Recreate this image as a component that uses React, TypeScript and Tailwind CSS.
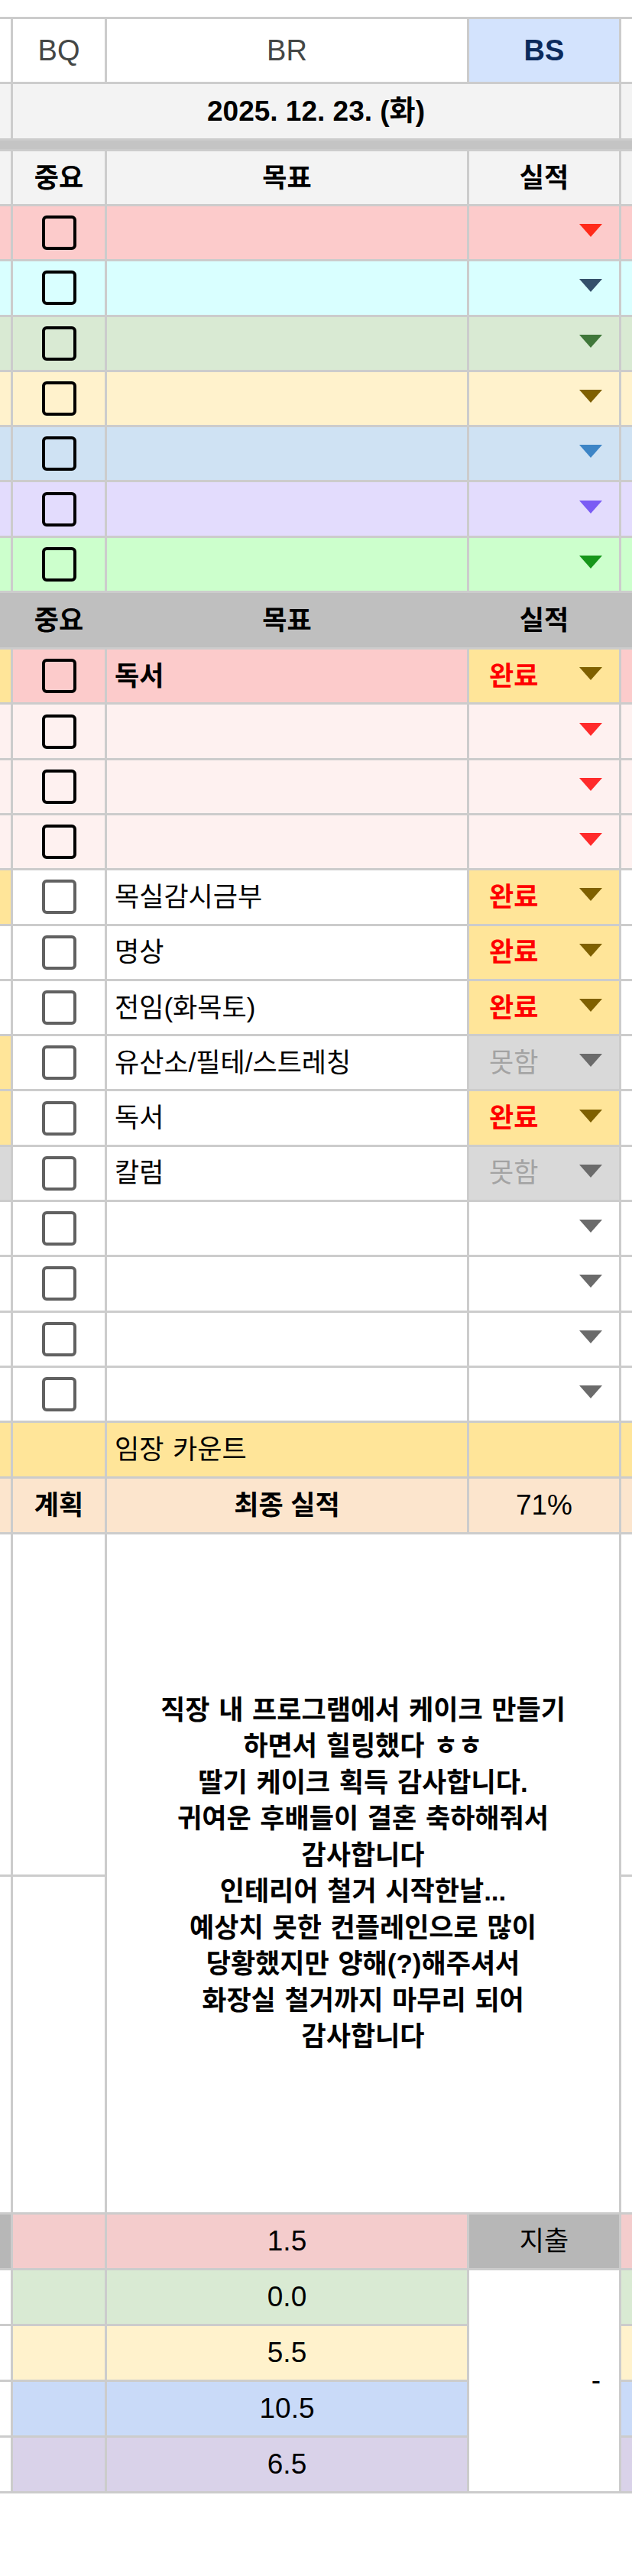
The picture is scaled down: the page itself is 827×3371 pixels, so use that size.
import React from "react";

const GRID = "grid grid-cols-[14px_120px_471px_196px_14px] gap-x-[3px]";
const FONT = "font-['Liberation_Sans','Noto_Sans_CJK_KR',sans-serif]";

function Arrow({ color }: { color: string }) {
  return (
    <svg width="30" height="17" viewBox="0 0 30 17" className="ml-auto mb-[6px] shrink-0">
      <polygon points="0,0 30,0 15,17" fill={color} />
    </svg>
  );
}

function Box({ gray }: { gray?: boolean }) {
  return (
    <div
      className={`w-[45px] h-[45px] rounded-[6px] border-[4px] ${
        gray ? "border-[#616161]" : "border-black"
      }`}
    />
  );
}

type Sec1 = { bg: string; arrow: string };
const sec1: Sec1[] = [
  { bg: "bg-[#fccbcb]", arrow: "#ff2a1a" },
  { bg: "bg-[#d9ffff]", arrow: "#34506b" },
  { bg: "bg-[#d9ead3]", arrow: "#40773a" },
  { bg: "bg-[#fff2cc]", arrow: "#7f6000" },
  { bg: "bg-[#cfe2f3]", arrow: "#3d85c6" },
  { bg: "bg-[#e3dcfd]", arrow: "#7a5cf4" },
  { bg: "bg-[#ccffcc]", arrow: "#16961a" },
];

type Sec2 = {
  ls: string;
  main: string;
  bs: string;
  rs: string;
  text?: string;
  bold?: boolean;
  status?: "완료" | "못함";
  arrow: string;
  gray?: boolean;
};

const Y = "bg-[#ffe599]";
const W = "bg-white";
const G = "bg-[#d9d9d9]";
const P = "bg-[#fccbcb]";
const LP = "bg-[#fef1f0]";

const sec2: Sec2[] = [
  { ls: Y, main: P, bs: Y, rs: P, text: "독서", bold: true, status: "완료", arrow: "#7f6000" },
  { ls: LP, main: LP, bs: LP, rs: LP, arrow: "#ff2b2b" },
  { ls: LP, main: LP, bs: LP, rs: LP, arrow: "#ff2b2b" },
  { ls: LP, main: LP, bs: LP, rs: LP, arrow: "#ff2b2b" },
  { ls: Y, main: W, bs: Y, rs: W, text: "목실감시금부", status: "완료", arrow: "#7f6000", gray: true },
  { ls: W, main: W, bs: Y, rs: W, text: "명상", status: "완료", arrow: "#7f6000", gray: true },
  { ls: W, main: W, bs: Y, rs: W, text: "전임(화목토)", status: "완료", arrow: "#7f6000", gray: true },
  { ls: Y, main: W, bs: G, rs: W, text: "유산소/필테/스트레칭", status: "못함", arrow: "#6b6b6b", gray: true },
  { ls: Y, main: W, bs: Y, rs: W, text: "독서", status: "완료", arrow: "#7f6000", gray: true },
  { ls: G, main: W, bs: G, rs: W, text: "칼럼", status: "못함", arrow: "#6b6b6b", gray: true },
  { ls: W, main: W, bs: W, rs: W, arrow: "#6b6b6b", gray: true },
  { ls: W, main: W, bs: W, rs: W, arrow: "#6b6b6b", gray: true },
  { ls: W, main: W, bs: W, rs: W, arrow: "#6b6b6b", gray: true },
  { ls: W, main: W, bs: W, rs: W, arrow: "#6b6b6b", gray: true },
];

const bottom = [
  { bg: "bg-[#f4cccc]", v: "1.5" },
  { bg: "bg-[#d9ead3]", v: "0.0" },
  { bg: "bg-[#fff2cc]", v: "5.5" },
  { bg: "bg-[#c9daf8]", v: "10.5" },
  { bg: "bg-[#d9d2e9]", v: "6.5" },
];

const bigText = `직장 내 프로그램에서 케이크 만들기
하면서 힐링했다 ㅎㅎ
딸기 케이크 획득 감사합니다.
귀여운 후배들이 결혼 축하해줘서
감사합니다
인테리어 철거 시작한날...
예상치 못한 컨플레인으로 많이
당황했지만 양해(?)해주셔서
화장실 철거까지 마무리 되어
감사합니다`;

export default function App() {
  return (
    <div className={`bg-white min-h-[3371px] w-[827px] pt-[22px] text-black ${FONT}`}>
      <div className="bg-[#cccccc] flex flex-col gap-[3px] py-[3px]">
        {/* column letters */}
        <div className={`${GRID} h-[82px]`}>
          <div className="bg-white" />
          <div className="bg-white flex items-center justify-center text-[38px] text-[#444746]">BQ</div>
          <div className="bg-white flex items-center justify-center text-[38px] text-[#444746]">BR</div>
          <div className="bg-[#d3e3fd] flex items-center justify-center text-[38px] font-bold text-[#0b2a5c]">BS</div>
          <div className="bg-white" />
        </div>

        {/* date */}
        <div className={`${GRID} h-[71px]`}>
          <div className="bg-[#f3f3f3]" />
          <div className="col-span-3 bg-[#f3f3f3] flex items-center justify-center text-[37px] font-bold leading-[44px]">
            2025. 12. 23. (화)
          </div>
          <div className="bg-[#f3f3f3]" />
        </div>

        {/* frozen separator */}
        <div className="h-[11px] bg-[#c4c4c4]" />

        {/* header 1 */}
        <div className={`${GRID} h-[69px] text-[35px] font-bold leading-[42px]`}>
          <div className="bg-[#f3f3f3]" />
          <div className="bg-[#f3f3f3] flex items-center justify-center">중요</div>
          <div className="bg-[#f3f3f3] flex items-center justify-center">목표</div>
          <div className="bg-[#f3f3f3] flex items-center justify-center">실적</div>
          <div className="bg-[#f3f3f3]" />
        </div>

        {sec1.map((r, i) => (
          <div key={i} className={`${GRID} h-[69.3px]`}>
            <div className={r.bg} />
            <div className={`${r.bg} flex items-center justify-center`}>
              <Box />
            </div>
            <div className={r.bg} />
            <div className={`${r.bg} flex items-center pr-[22px]`}>
              <Arrow color={r.arrow} />
            </div>
            <div className={r.bg} />
          </div>
        ))}

        {/* header 2 */}
        <div className={`${GRID} h-[71px] text-[35px] font-bold leading-[42px] bg-[#bfbfbf]`}>
          <div className="bg-[#bfbfbf]" />
          <div className="bg-[#bfbfbf] flex items-center justify-center">중요</div>
          <div className="bg-[#bfbfbf] flex items-center justify-center">목표</div>
          <div className="bg-[#bfbfbf] flex items-center justify-center">실적</div>
          <div className="bg-[#bfbfbf]" />
        </div>

        {sec2.map((r, i) => (
          <div key={i} className={`${GRID} h-[69.3px] text-[35px] leading-[42px]`}>
            <div className={r.ls} />
            <div className={`${r.main} flex items-center justify-center`}>
              <Box gray={r.gray} />
            </div>
            <div className={`${r.main} flex items-center pl-[10px] ${r.bold ? "font-bold" : ""}`}>
              {r.text}
            </div>
            <div className={`${r.bs} flex items-center pl-[26px] pr-[22px]`}>
              {r.status && (
                <span
                  className={
                    r.status === "완료" ? "text-[#ff0000] font-bold" : "text-[#a3a3a3]"
                  }
                >
                  {r.status}
                </span>
              )}
              <Arrow color={r.arrow} />
            </div>
            <div className={r.rs} />
          </div>
        ))}

        {/* 임장 카운트 */}
        <div className={`${GRID} h-[69.3px] text-[35px] leading-[42px]`}>
          <div className="bg-[#ffe599]" />
          <div className="bg-[#ffe599]" />
          <div className="bg-[#ffe599] flex items-center pl-[10px] [word-spacing:2px]">임장 카운트</div>
          <div className="bg-[#ffe599]" />
          <div className="bg-[#ffe599]" />
        </div>

        {/* 계획 */}
        <div className={`${GRID} h-[70px] text-[35px] leading-[42px]`}>
          <div className="bg-[#fce5cd]" />
          <div className="bg-[#fce5cd] flex items-center justify-center font-bold">계획</div>
          <div className="bg-[#fce5cd] flex items-center justify-center font-bold">최종 실적</div>
          <div className="bg-[#fce5cd] flex items-center justify-center text-[37px]">71%</div>
          <div className="bg-[#fce5cd]" />
        </div>

        {/* big memo */}
        <div className={`${GRID} grid-rows-[445px_439px] gap-y-[3px]`}>
          <div className="bg-white col-start-1 row-start-1" />
          <div className="bg-white col-start-2 row-start-1" />
          <div className="bg-white col-start-1 row-start-2" />
          <div className="bg-white col-start-2 row-start-2" />
          <div className="bg-white col-start-3 col-span-2 row-start-1 row-span-2 flex items-center justify-center text-center whitespace-pre-line text-[35px] leading-[47.5px] font-bold [word-spacing:2px]">
            {bigText}
          </div>
          <div className="bg-white col-start-5 row-start-1" />
          <div className="bg-white col-start-5 row-start-2" />
        </div>

        {/* bottom */}
        <div className={`${GRID} grid-rows-[repeat(5,70px)] gap-y-[3px] text-[37px] leading-[44px]`}>
          {bottom.map((b, i) => (
            <React.Fragment key={i}>
              <div className={`${i === 0 ? "bg-[#b7b7b7]" : "bg-white"} col-start-1`} style={{ gridRowStart: i + 1 }} />
              <div className={`${b.bg} col-start-2`} style={{ gridRowStart: i + 1 }} />
              <div className={`${b.bg} col-start-3 flex items-center justify-center`} style={{ gridRowStart: i + 1 }}>
                {b.v}
              </div>
              <div className={`${b.bg} col-start-5`} style={{ gridRowStart: i + 1 }} />
            </React.Fragment>
          ))}
          <div className="bg-[#b7b7b7] col-start-4 row-start-1 flex items-center justify-center text-[35px]">지출</div>
          <div className="bg-white col-start-4 row-start-2 row-span-4 flex items-center justify-end pr-[24px]">-</div>
        </div>
      </div>
    </div>
  );
}
